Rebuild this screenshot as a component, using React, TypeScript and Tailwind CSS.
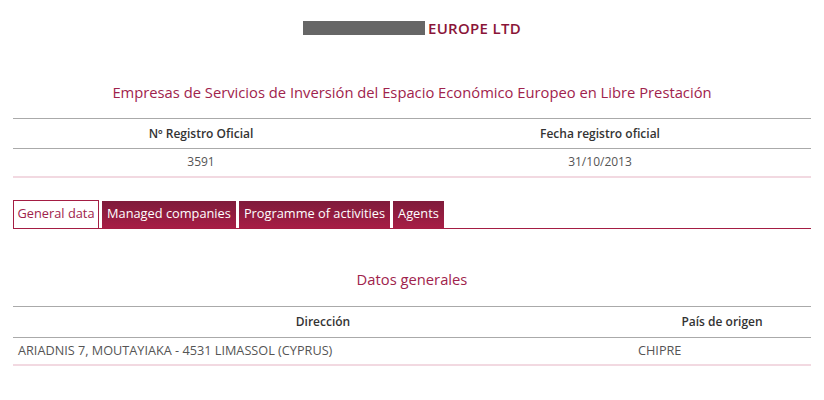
const TABS = ["General data", "Managed companies", "Programme of activities", "Agents"];

export default function App() {
  return (
    <div className="w-[824px] h-[400px] bg-white px-[13px] text-[#333]" style={{ fontFamily: '"Open Sans", "Noto Sans", sans-serif' }}>
      {/* Entity name */}
      <div className="h-[57px] pt-[21px] flex justify-center">
        <div className="flex items-center gap-[3px] h-[14px]">
          <span className="block w-[122px] h-[14px] bg-[#666]" />
          <span className="text-[15px] font-semibold tracking-[0.3px] text-[#8a1538] leading-none">EUROPE LTD</span>
        </div>
      </div>

      <h2 className="h-[61px] pt-[25px] text-center text-[14.75px] text-[#a0234c] leading-[20px]">
        Empresas de Servicios de Inversión del Espacio Económico Europeo en Libre Prestación
      </h2>

      <table className="w-full border-collapse text-[12px]">
        <thead>
          <tr className="h-[30px] border-y border-[#aaa]">
            <th className="w-[376px] font-semibold text-center">Nº Registro Oficial</th>
            <th className="font-semibold text-center">Fecha registro oficial</th>
          </tr>
        </thead>
        <tbody>
          <tr className="h-[28px] border-b-2 border-[#f2d9e1] text-[#555]">
            <td className="text-center">3591</td>
            <td className="text-center">31/10/2013</td>
          </tr>
        </tbody>
      </table>

      {/* Tabs */}
      <div className="mt-[22px] flex gap-[3px] border-b border-[#a41d43] h-[29px] text-[12.8px]">
        {TABS.map((t, i) =>
          i === 0 ? (
            <div key={t} className="h-[28px] px-[3.5px] flex items-center border border-[#a41d43] border-b-0 bg-white text-[#a0234c]">
              {t}
            </div>
          ) : (
            <div key={t} className="h-[27px] mt-[1px] px-[5px] flex items-center bg-gradient-to-b from-[#7f1b3b] to-[#a71d45] text-white font-medium">
              {t}
            </div>
          )
        )}
      </div>

      <h3 className="mt-[40px] h-[37px] text-center text-[14.75px] text-[#a0234c] leading-[20px]">Datos generales</h3>

      <table className="w-full border-collapse text-[12px]">
        <thead>
          <tr className="h-[31px] border-y border-[#aaa]">
            <th className="w-[620px] font-semibold text-center">Dirección</th>
            <th className="font-semibold text-center">País de origen</th>
          </tr>
        </thead>
        <tbody>
          <tr className="h-[28px] border-b-2 border-[#f2d9e1] text-[#555] text-[12.7px]">
            <td className="text-left pl-[5px]">ARIADNIS 7, MOUTAYIAKA - 4531 LIMASSOL (CYPRUS)</td>
            <td className="text-left pl-[5px]">CHIPRE</td>
          </tr>
        </tbody>
      </table>
    </div>
  );
}
